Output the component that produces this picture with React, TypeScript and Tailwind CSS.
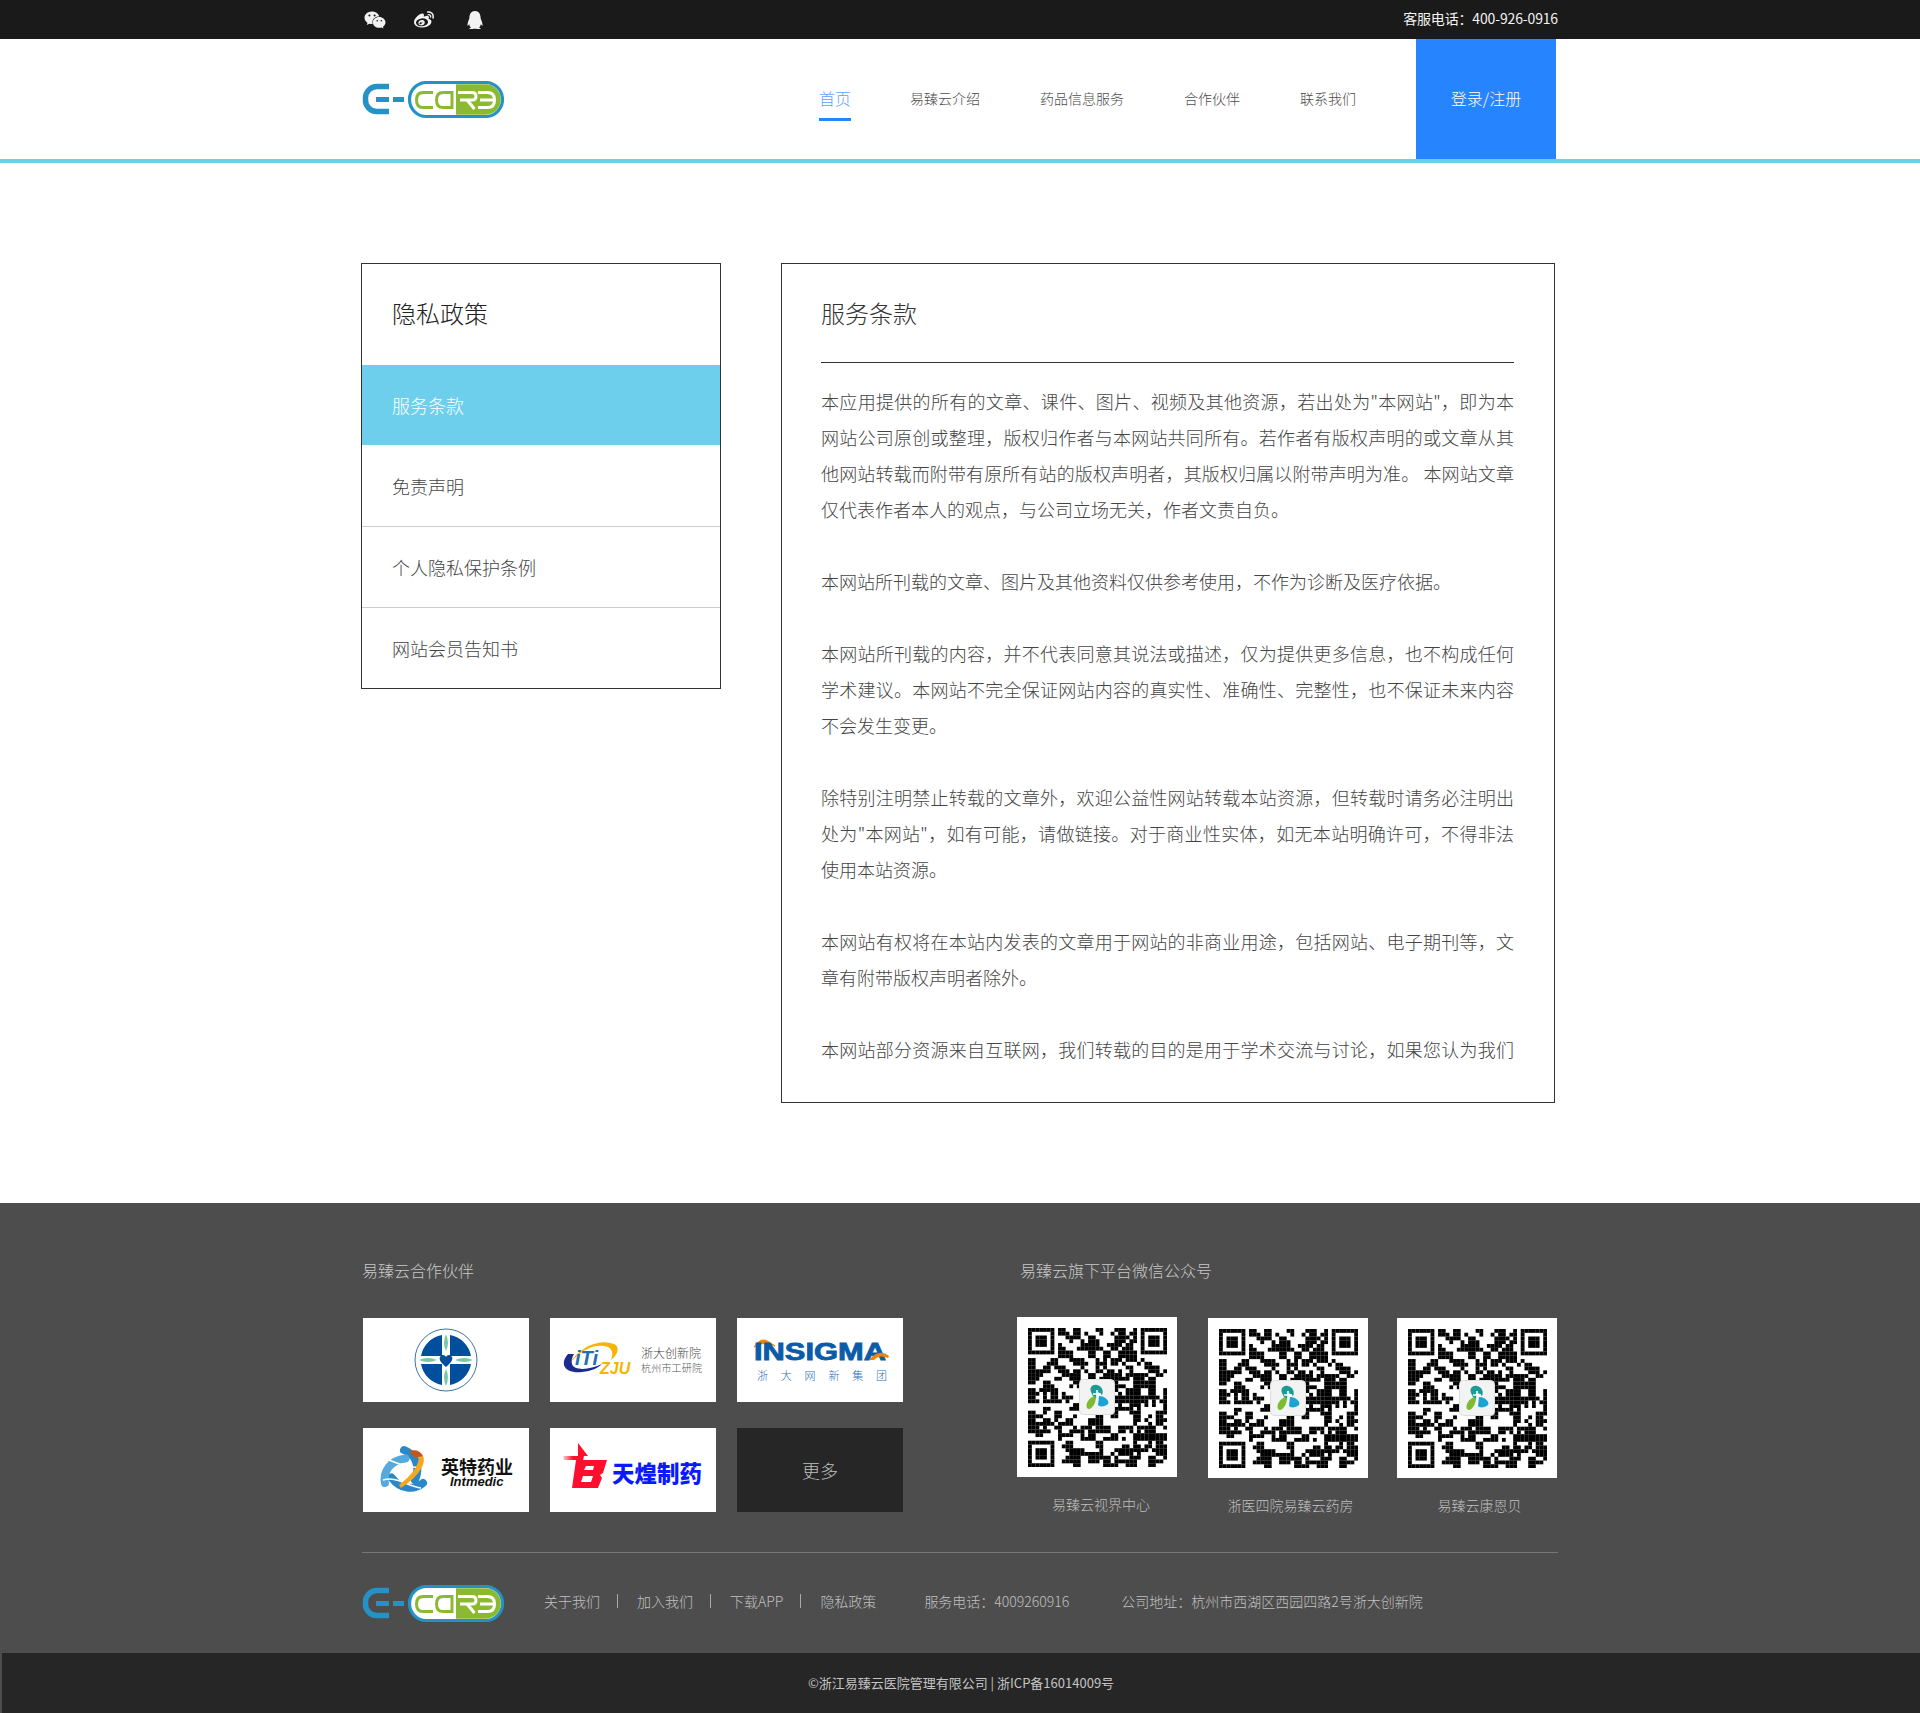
import { FaQq, FaWeibo, FaWeixin } from "react-icons/fa";

const navItems = ["易臻云介绍", "药品信息服务", "合作伙伴", "联系我们"];
const sideItems = [
  { label: "免责声明", row: "h-[82px] border-b border-[#ccc]" },
  { label: "个人隐私保护条例", row: "h-[81px] border-b border-[#ccc]" },
  { label: "网站会员告知书", row: "h-[80px]" },
];

const paragraphs = [
  "本应用提供的所有的文章、课件、图片、视频及其他资源，若出处为\"本网站\"，即为本网站公司原创或整理，版权归作者与本网站共同所有。若作者有版权声明的或文章从其他网站转载而附带有原所有站的版权声明者，其版权归属以附带声明为准。 本网站文章仅代表作者本人的观点，与公司立场无关，作者文责自负。",
  "本网站所刊载的文章、图片及其他资料仅供参考使用，不作为诊断及医疗依据。",
  "本网站所刊载的内容，并不代表同意其说法或描述，仅为提供更多信息，也不构成任何学术建议。本网站不完全保证网站内容的真实性、准确性、完整性，也不保证未来内容不会发生变更。",
  "除特别注明禁止转载的文章外，欢迎公益性网站转载本站资源，但转载时请务必注明出处为\"本网站\"，如有可能，请做链接。对于商业性实体，如无本站明确许可，不得非法使用本站资源。",
  "本网站有权将在本站内发表的文章用于网站的非商业用途，包括网站、电子期刊等，文章有附带版权声明者除外。",
];

const qrList = [
  { label: "易臻云视界中心", box: "mt-0 ml-0", caption: "ml-[8px]" },
  { label: "浙医四院易臻云药房", box: "mt-px ml-[31px]", caption: "ml-[5px]" },
  { label: "易臻云康恩贝", box: "mt-px ml-[29px]", caption: "ml-[5px]" },
];

function Logo() {
  return (
    <svg width="142" height="38" viewBox="0 0 142 38" fill="none">
      <path d="M27 5.5H15A11.5 11.5 0 0 0 3.5 17v1A11.5 11.5 0 0 0 15 30.5H27" stroke="#2592c6" strokeWidth="5.5" />
      <path d="M14 18.5H27M31 18.5H42" stroke="#2592c6" strokeWidth="5" />
      <rect x="47.5" y="1.5" width="93" height="34" rx="17" fill="#fff" stroke="#2592c6" strokeWidth="3.2" />
      <path d="M94 3.2H123.5A15.3 15.3 0 0 1 123.5 33.8H94Z" fill="#8bba30" />
      <path d="M71 11.5H61Q54.5 11.5 54.5 19Q54.5 26.5 61 26.5H71" stroke="#8bba30" strokeWidth="3" />
      <path d="M90 28V11.5H81Q74.5 11.5 74.5 19Q74.5 26.5 81 26.5H90" stroke="#8bba30" strokeWidth="3" />
      <path d="M96 11.5H110Q114 11.5 114 15.3Q114 19 110 19H98M105 19L112.5 28" stroke="#fff" strokeWidth="3" />
      <path d="M116 11.5H125.5Q132.5 11.5 132.5 19Q132.5 26.5 125.5 26.5H116M118 19H131" stroke="#fff" strokeWidth="3" />
    </svg>
  );
}

function seeded(x: number, y: number) {
  const v = Math.sin(x * 127.1 + y * 311.7 + 4.3) * 43758.5453;
  return v - Math.floor(v);
}

function QrCode() {
  const n = 37;
  const finder = (x: number, y: number) => {
    const inBox = (ox: number, oy: number) => x >= ox && x < ox + 7 && y >= oy && y < oy + 7;
    const ring = (ox: number, oy: number) => {
      const a = x - ox;
      const b = y - oy;
      return a === 0 || a === 6 || b === 0 || b === 6 || (a >= 2 && a <= 4 && b >= 2 && b <= 4);
    };
    if (inBox(0, 0)) return ring(0, 0);
    if (inBox(n - 7, 0)) return ring(n - 7, 0);
    if (inBox(0, n - 7)) return ring(0, n - 7);
    return null;
  };
  const cells: { x: number; y: number }[] = [];
  for (let y = 0; y < n; y++) {
    for (let x = 0; x < n; x++) {
      const f = finder(x, y);
      const quiet = (x <= 7 && y <= 7) || (x >= n - 8 && y <= 7) || (x <= 7 && y >= n - 8);
      const mix = 0.45 * seeded(x, y) + 0.55 * seeded(x - (x % 2), y - (y % 2));
      const on = f !== null ? f : quiet ? false : mix > 0.47;
      if (on) cells.push({ x, y });
    }
  }
  return (
    <svg width="139" height="139" viewBox="0 0 37 37">
      {cells.map((c) => (
        <rect key={`${c.x}-${c.y}`} x={c.x} y={c.y} width="1.02" height="1.02" fill="#000" />
      ))}
    </svg>
  );
}

function QrBadge() {
  return (
    <svg className="absolute left-[62px] top-[62px]" width="36" height="36" viewBox="0 0 36 36">
      <rect x="0.5" y="0.5" width="35" height="35" rx="4" fill="#f3f3f3" stroke="#ddd" />
      <path d="M12 13C10 8 14 5 18 6C23 7 25 12 23 16L19 13L18 20L14 17Z" fill="#1c9c97" />
      <path d="M15 17C10 19 6 25 8 29C11 32 16 27 17 19Z" fill="#7cbb32" />
      <path d="M20 17C26 17 31 22 29 25C26 28 20 28 19 26Z" fill="#1ba3d2" />
      <path d="M18 11V22M14 15H22" stroke="#fff" strokeWidth="1.6" />
    </svg>
  );
}

function CrossLogo() {
  return (
    <svg width="66" height="66" viewBox="0 0 66 66">
      <circle cx="33" cy="33" r="31" fill="#fff" stroke="#3b75a8" strokeWidth="1" />
      <path d="M29 8A26 26 0 0 0 8 29H29ZM37 8A26 26 0 0 1 58 29H37ZM29 58A26 26 0 0 1 8 37H29ZM37 58A26 26 0 0 0 58 37H37Z" fill="#004f9c" />
      <path d="M33 7Q37 16 33 24Q29 16 33 7ZM33 42Q37 50 33 59Q29 50 33 42ZM6 33Q15 29 24 33Q15 37 6 33ZM42 33Q51 29 60 33Q51 37 42 33Z" fill="#7bc8a4" />
      <path d="M33 40C27 35 26 32 27 30C29 27 32 28 33 30C34 28 37 27 39 30C40 32 39 35 33 40Z" fill="#004f9c" />
    </svg>
  );
}

function ItiLogo() {
  return (
    <svg width="166" height="84" viewBox="0 0 166 84">
      <path d="M19 46C29 30 49 19 66 27C70 32 66 38 61 42C64 34 62 29 54 28C42 26 29 34 19 46Z" fill="#f5b400" />
      <path d="M18 36C9 46 15 56 32 54C42 53 48 50 52 46C40 52 24 53 22 46C21 43 22 39 24 36Z" fill="#1d2a8f" />
      <text x="25" y="47" fill="#1d6fb8" fontSize="20" fontWeight="800" fontStyle="italic" fontFamily="'Liberation Sans', sans-serif">iTi</text>
      <text x="50" y="56" fill="#f5b400" fontSize="16" fontWeight="800" fontStyle="italic" fontFamily="'Liberation Sans', sans-serif">ZJU</text>
      <text x="91" y="40" fill="#444" fontSize="12" fontFamily="'Noto Sans CJK SC', sans-serif">浙大创新院</text>
      <text x="91" y="54" fill="#555" fontSize="10" textLength="61" fontFamily="'Noto Sans CJK SC', sans-serif">杭州市工研院</text>
    </svg>
  );
}

function InsigmaLogo() {
  return (
    <svg width="166" height="84" viewBox="0 0 166 84">
      <path d="M17 29Q24 18 32 24Q35 26 38 28Q28 22 17 29Z" fill="#f08300" stroke="#f08300" />
      <text x="17" y="42" textLength="132" lengthAdjust="spacingAndGlyphs" fill="#0a5ba8" stroke="#0a5ba8" strokeWidth="0.8" fontSize="23" fontWeight="900" fontFamily="'Liberation Sans', sans-serif">INSIGMA</text>
      <path d="M132 42Q142 30 152 38L151 40Q142 36 137 42Z" fill="#f08300" />
      <text x="20" y="62" textLength="130" fill="#1f6fb8" fontSize="11" fontFamily="'Noto Sans CJK SC', sans-serif">浙 大 网 新 集 团</text>
    </svg>
  );
}

function IntmedicLogo() {
  return (
    <svg width="166" height="84" viewBox="0 0 166 84" fill="none">
      <g strokeWidth="8" strokeLinecap="round">
        <path d="M41 22C52 26 58 38 52 52" stroke="#2b88c8" />
        <path d="M41 22C52 26 58 38 52 52" stroke="#2b88c8" transform="rotate(120 41 44)" />
        <path d="M41 22C52 26 58 38 52 52" stroke="#56a9dc" transform="rotate(240 41 44)" />
      </g>
      <path d="M26 32C36 36 50 42 62 38M20 52C34 48 44 58 58 60" stroke="#fff" strokeWidth="1.5" />
      <path d="M60 28C64 36 54 50 38 60L36 57C48 48 56 38 56 28Z" fill="#f4a81d" />
      <path d="M46 23Q56 20 60 28L52 30Z" fill="#c4551d" />
      <text x="78" y="46" fill="#111" fontSize="18" fontWeight="700" fontFamily="'Noto Sans CJK SC', sans-serif">英特药业</text>
      <text x="87" y="58" fill="#111" fontSize="13" fontWeight="700" fontStyle="italic" fontFamily="'Liberation Sans', sans-serif">Intmedic</text>
    </svg>
  );
}

function TianhuangLogo() {
  return (
    <svg width="166" height="84" viewBox="0 0 166 84">
      <defs>
        <linearGradient id="fade" x1="0" x2="1" y1="0" y2="0">
          <stop offset="0" stopColor="#ff0f2e" stopOpacity="0.2" />
          <stop offset="0.4" stopColor="#ff0f2e" />
        </linearGradient>
      </defs>
      <path d="M28 15L38 28H34L33 32H14L13 28H28Z" fill="url(#fade)" />
      <path d="M26 32H57L53 45L50 47L52 50L48 60H22ZM36 38L34 42H43L44 38ZM33 48L31 54H41L43 48Z" fill="#ff0f2e" fillRule="evenodd" />
      <text x="62" y="54" fill="#0a1aff" fontSize="22.5" fontWeight="900" fontFamily="'Noto Sans CJK SC', sans-serif">天煌制药</text>
    </svg>
  );
}

export default function App() {
  return (
    <div className="min-h-[1713px] bg-white font-['Noto_Sans_CJK_SC',sans-serif] font-light">
      <div className="h-[39px] bg-[#1a1a1a]">
        <div className="mx-auto flex h-full w-[1196px] items-center text-[#f2f2f2]">
          <FaWeixin className="ml-[2px] text-[22px]" />
          <FaWeibo className="ml-[28px] text-[20px]" />
          <FaQq className="ml-[32px] text-[18px]" />
          <span className="ml-auto pb-[3px] text-sm font-normal tracking-[-0.15px]">客服电话：400-926-0916</span>
        </div>
      </div>

      <header className="h-[124px] border-b-4 border-[#6dcfec] bg-white">
        <div className="mx-auto flex h-full w-[1196px] items-center justify-between">
          <div className="mt-[2px] flex"><Logo /></div>
          <nav className="mr-[2px] flex h-full items-center gap-[60px] text-sm text-[#4d4d4d]">
            <a className="relative -mr-px flex h-full items-center pb-[2px] text-base text-[#5f9fff]">
              首页
              <span className="absolute bottom-[38px] left-0 h-[3px] w-full bg-[#2784ff]" />
            </a>
            {navItems.map((item) => (
              <a key={item} className="pb-[2px]">{item}</a>
            ))}
            <a className="flex h-full w-[140px] items-center justify-center bg-[#2784ff] pb-[2px] text-base text-white">
              登录/注册
            </a>
          </nav>
        </div>
      </header>

      <main className="mx-auto flex w-[1198px] items-start gap-[60px] py-[100px]">
        <aside className="w-[360px] border border-[#333]">
          <h2 className="flex h-[101px] items-center pb-[4px] pl-[30px] text-2xl text-[#222]">隐私政策</h2>
          <div className="flex h-[80px] items-center bg-[#6dcfec] pl-[30px] text-lg text-white">服务条款</div>
          {sideItems.map((item) => (
            <div key={item.label} className={`flex items-center pl-[30px] text-lg text-[#444] ${item.row}`}>
              {item.label}
            </div>
          ))}
        </aside>

        <article className="h-[840px] w-[774px] border border-[#333] pr-10 pl-[39px]">
          <h2 className="flex h-[99px] items-center border-b border-[#333] text-2xl text-[#333]">服务条款</h2>
          <div className="mt-[20px] text-justify text-lg leading-[36px] text-[#444]">
            {paragraphs.map((p) => (
              <p key={p} className="mb-[36px]">
                {p}
              </p>
            ))}
            <p className="[text-align-last:justify]">本网站部分资源来自互联网，我们转载的目的是用于学术交流与讨论，如果您认为我们</p>
          </div>
        </article>
      </main>

      <footer className="bg-[#4d4d4d]">
        <div className="mx-auto w-[1196px] pt-[55px]">
          <div className="flex h-[295px] border-b border-[#777]">
            <div className="w-[658px]">
              <h3 className="text-base leading-6 text-[#c8c8c8]">易臻云合作伙伴</h3>
              <div className="mt-[36px] ml-px grid w-[540px] grid-cols-[166px_166px_166px] gap-x-[21px] gap-y-[26px]">
                <div className="flex h-[84px] items-center justify-center bg-white"><CrossLogo /></div>
                <div className="h-[84px] bg-white"><ItiLogo /></div>
                <div className="h-[84px] bg-white"><InsigmaLogo /></div>
                <div className="h-[84px] bg-white"><IntmedicLogo /></div>
                <div className="h-[84px] bg-white"><TianhuangLogo /></div>
                <div className="flex h-[84px] items-center justify-center bg-[#262626] text-lg text-[#bfbfbf]">更多</div>
              </div>
            </div>
            <div>
              <h3 className="text-base leading-6 text-[#c8c8c8]">易臻云旗下平台微信公众号</h3>
              <div className="mt-[35px] -ml-[3px] flex">
                {qrList.map((qr) => (
                  <div key={qr.label} className={`w-[160px] ${qr.box}`}>
                    <div className="relative flex h-[160px] items-center justify-center bg-white">
                      <QrCode />
                      <QrBadge />
                    </div>
                    <p className={`mt-[17px] text-center text-sm text-[#bfbfbf] ${qr.caption}`}>{qr.label}</p>
                  </div>
                ))}
              </div>
            </div>
          </div>

          <div className="flex h-[100px] items-center pb-[4px] text-sm text-[#c0c0c0]">
            <div className="mt-[6px] flex"><Logo /></div>
            <span className="ml-[40px]">关于我们</span>
            <span className="ml-[17px] h-[14px] w-px bg-[#aaa]" />
            <span className="ml-[19px]">加入我们</span>
            <span className="ml-[17px] h-[14px] w-px bg-[#aaa]" />
            <span className="ml-[19px]">下载APP</span>
            <span className="ml-[17px] h-[14px] w-px bg-[#aaa]" />
            <span className="ml-[19px]">隐私政策</span>
            <span className="ml-[48px]">服务电话：4009260916</span>
            <span className="ml-[52px]">公司地址：杭州市西湖区西园四路2号浙大创新院</span>
          </div>
        </div>

        <div className="ml-[2px] flex h-[60px] items-center justify-center bg-[#262626] text-[13px] font-normal text-[#c4c4c4]">
          ©浙江易臻云医院管理有限公司 | 浙ICP备16014009号
        </div>
      </footer>
    </div>
  );
}
